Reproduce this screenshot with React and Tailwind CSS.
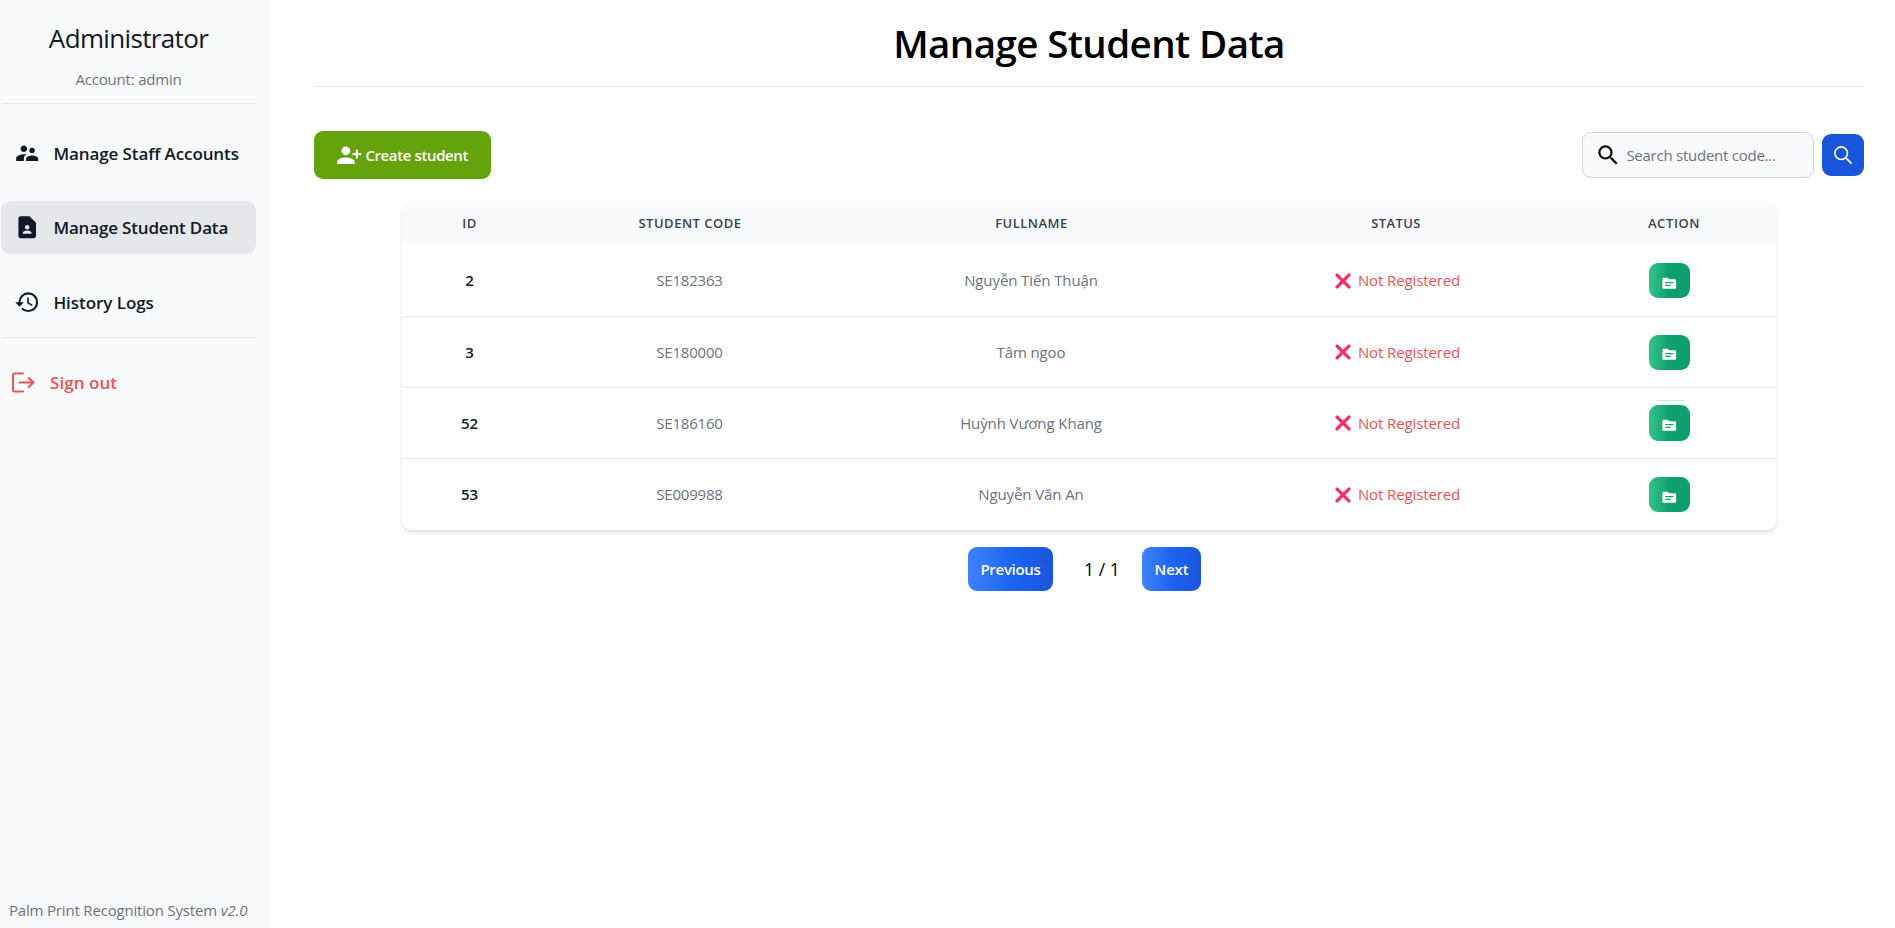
import React from "react";
import {
  MdSupervisorAccount,
  MdContactPage,
  MdHistory,
  MdPersonAddAlt1,
  MdSearch,
  MdSource,
} from "react-icons/md";

const students = [
  { id: 2, code: "SE182363", name: "Nguyễn Tiến Thuận", row: "h-[72px]", button: "h-[35px]", ring: false },
  { id: 3, code: "SE180000", name: "Tâm ngoo", row: "h-[71px]", button: "h-[35px]", ring: false },
  { id: 52, code: "SE186160", name: "Huỳnh Vương Khang", row: "h-[71px]", button: "h-[36px]", ring: true },
  { id: 53, code: "SE009988", name: "Nguyễn Văn An", row: "h-[71px]", button: "h-[35px]", ring: false },
];

function ExitIcon() {
  return (
    <svg width="24" height="22" viewBox="0 0 24 22" fill="none" stroke="currentColor" strokeWidth="2" strokeLinecap="round" strokeLinejoin="round">
      <path d="M12 1.5H3.2Q2 1.5 2 2.7V18.3Q2 19.5 3.2 19.5H12" />
      <path d="M8.5 10.5H22.5M17.7 6L22.5 10.5L17.7 15" />
    </svg>
  );
}

function ThinSearchIcon() {
  return (
    <svg width="20" height="20" viewBox="0 0 20 20" fill="none" stroke="white" strokeWidth="1.6">
      <circle cx="8.2" cy="8.2" r="6.3" />
      <path d="M13.3 13.3L18.6 18.6" strokeWidth="1.8" />
    </svg>
  );
}

function CrossMark() {
  return (
    <svg width="16" height="16" viewBox="0 0 16 16" fill="none" stroke="#f92f60" strokeWidth="3.3" strokeLinecap="round">
      <path d="M2.1 2.1L13.9 13.9M13.9 2.1L2.1 13.9" />
    </svg>
  );
}

function NavItem({ icon: Icon, label, active, spacing }) {
  return (
    <a className={`flex h-[53px] items-center rounded-[9px] pl-[13px] text-[17px] font-semibold text-gray-900 ${spacing} ${active ? "bg-[#e5e7eb]" : ""}`}>
      <Icon className="mr-[13px] size-[26.4px] shrink-0 text-[#111827]" />
      <span className="whitespace-nowrap">{label}</span>
    </a>
  );
}

function Sidebar() {
  return (
    <aside className="flex h-full w-[270px] shrink-0 flex-col bg-[#f9fafb] pr-[14px] pl-px">
      <div className="flex h-[104px] shrink-0 flex-col items-center border-b border-[#e5e7eb] pt-[20px]">
        <h2 className="text-[26px] leading-9 tracking-[-0.65px] text-[#111827]">Administrator</h2>
        <p className="mt-[12px] text-[15px] leading-[22px] tracking-[-0.2px] text-[#6b7280]">Account: admin</p>
      </div>
      <nav className="flex h-[234px] shrink-0 flex-col border-b border-[#e5e7eb]">
        <NavItem icon={MdSupervisorAccount} label="Manage Staff Accounts" spacing="mt-[23px] tracking-[-0.1px]" />
        <NavItem icon={MdContactPage} label="Manage Student Data" spacing="mt-[21px] tracking-[-0.17px]" active />
        <NavItem icon={MdHistory} label="History Logs" spacing="mt-[22px] tracking-[-0.05px]" />
      </nav>
      <a className="mt-[18px] flex h-[53px] items-center pl-[10px] text-[#f05252]">
        <ExitIcon />
        <span className="ml-[15px] text-[17px] font-semibold tracking-[0.05px]">Sign out</span>
      </a>
      <p className="mt-auto mb-[7px] pl-[8px] text-[15px] leading-[22px] whitespace-nowrap text-[#6b7280]">
        <span className="tracking-[-0.18px]">Palm Print Recognition System </span>
        <em className="tracking-[-0.1px]">v2.0</em>
      </p>
    </aside>
  );
}

function Toolbar() {
  return (
    <div className="mt-[44px] flex h-12 items-center justify-between">
      <button className="flex h-12 w-[177px] items-center rounded-[9px] bg-[#65a30d] pl-[22px] text-[15px] font-semibold tracking-[-0.38px] whitespace-nowrap text-white">
        <MdPersonAddAlt1 className="mr-[3px] size-[26.4px] shrink-0" />
        Create student
      </button>
      <div className="flex items-center gap-2">
        <div className="flex h-[46px] w-[232px] items-center rounded-[9px] border border-[#d1d5db] bg-[#f9fafb] pl-[12px]">
          <MdSearch className="size-[26.4px] shrink-0 text-black" />
          <span className="ml-[5px] text-[15px] tracking-[-0.25px] whitespace-nowrap text-[#6b7280]">Search student code...</span>
        </div>
        <button className="flex size-[42px] items-center justify-center rounded-[9px] bg-[#1a56db]">
          <ThinSearchIcon />
        </button>
      </div>
    </div>
  );
}

function StudentTable() {
  return (
    <div className="mt-[22px] ml-[88px] w-[1374px] overflow-hidden rounded-[9px] bg-white shadow-md">
      <table className="w-full table-fixed border-separate border-spacing-0 text-center">
        <colgroup>
          <col className="w-[135px]" />
          <col className="w-[305px]" />
          <col className="w-[378px]" />
          <col className="w-[352px]" />
          <col className="w-[204px]" />
        </colgroup>
        <thead>
          <tr className="h-11 bg-[#f9fafb] text-[13px] text-[#374151]">
            <th className="p-0 pt-px font-semibold tracking-[0.6px]">ID</th>
            <th className="p-0 pt-px pl-px font-semibold tracking-[0.5px]">STUDENT CODE</th>
            <th className="p-0 pt-px pl-px font-semibold tracking-[0.5px]">FULLNAME</th>
            <th className="p-0 pt-px font-semibold tracking-[0.4px]">STATUS</th>
            <th className="p-0 pt-px font-semibold tracking-[0.6px]">ACTION</th>
          </tr>
        </thead>
        <tbody className="text-[15px] text-[#6b7280] [&>tr:not(:last-child)>td]:border-b [&>tr>td]:border-[#e5e7eb] [&>tr>td]:p-0">
          {students.map((s) => (
            <tr key={s.id} className={s.row}>
              <td className="font-semibold text-[#111827]">{s.id}</td>
              <td className="tracking-[-0.22px]">{s.code}</td>
              <td className="tracking-[-0.1px]">{s.name}</td>
              <td>
                <div className="flex items-center justify-center gap-[7px] pl-[3px] tracking-[-0.12px] text-[#f05252]">
                  <CrossMark />
                  <span>Not Registered</span>
                </div>
              </td>
              <td>
                <div className="flex justify-center pr-[9px]">
                  <button className={`relative flex w-[41px] items-center justify-center rounded-[9px] bg-linear-to-r from-[#31c48d] via-[#0e9f6e] to-[#0e9f6e] pt-[5px] text-white ${s.button}`}>
                    {s.ring && <span className="absolute -top-[5px] left-[6px] h-px w-[29px] bg-[#bcf0da]" />}
                    <MdSource className="size-[16.5px]" />
                  </button>
                </div>
              </td>
            </tr>
          ))}
        </tbody>
      </table>
    </div>
  );
}

function Pagination() {
  return (
    <div className="mt-[17px] ml-[654px] flex h-11 items-center">
      <button className="h-11 w-[85px] rounded-[9px] bg-linear-to-r from-[#3f83f8] via-[#1c64f2] to-[#1a56db] text-[15px] font-semibold tracking-[-0.3px] text-white">
        Previous
      </button>
      <span className="ml-[31px] w-[58px] pt-px text-[17.6px] whitespace-nowrap text-black">1 / 1</span>
      <button className="h-11 w-[59px] rounded-[9px] bg-linear-to-r from-[#3f83f8] via-[#1c64f2] to-[#1a56db] text-[15px] font-semibold tracking-[-0.2px] text-white">
        Next
      </button>
    </div>
  );
}

export default function App() {
  return (
    <div className="flex h-screen w-full overflow-hidden bg-white font-['Open_Sans','Noto_Sans',sans-serif]">
      <Sidebar />
      <main className="flex min-w-0 flex-1 flex-col pr-[31px] pl-11">
        <header className="flex h-[87px] shrink-0 justify-center border-b border-[#e5e7eb] pt-[18px]">
          <h1 className="text-[38.5px] leading-[50px] font-semibold tracking-[-0.6px] text-black">Manage Student Data</h1>
        </header>
        <Toolbar />
        <StudentTable />
        <Pagination />
      </main>
    </div>
  );
}
